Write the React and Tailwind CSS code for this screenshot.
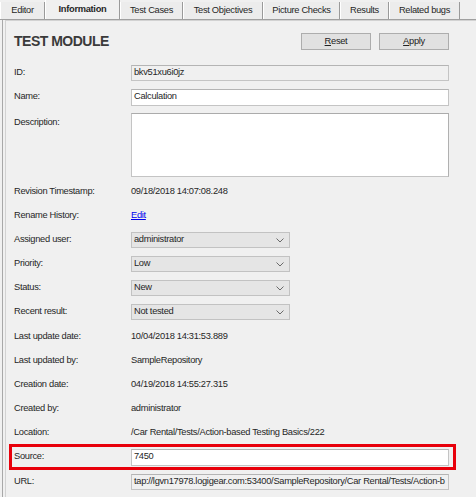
import React from 'react';

const TABS = [
  { label: 'Editor', w: 45 },
  { label: 'Information', w: 75, active: true },
  { label: 'Test Cases', w: 63 },
  { label: 'Test Objectives', w: 80 },
  { label: 'Picture Checks', w: 77 },
  { label: 'Results', w: 49 },
  { label: 'Related bugs', w: 71 },
];

function Chevron() {
  return (
    <svg width="8" height="5" viewBox="0 0 8 5" className="mr-[5px]">
      <path d="M0.5 0.5 L4 4 L7.5 0.5" fill="none" stroke="#6a6a6a" strokeWidth="1" />
    </svg>
  );
}

function Row({ label, children, className = '' }) {
  return (
    <div className={`flex h-[24px] items-center ${className}`}>
      <div className="w-[117px] shrink-0">{label}</div>
      <div className="flex-1 min-w-0 whitespace-nowrap">{children}</div>
    </div>
  );
}

function Select({ value }) {
  return (
    <div className="flex h-[16px] w-[159px] items-center justify-between border border-[#c2c2c2] bg-[#e5e5e5] pl-[2px]">
      <span>{value}</span>
      <Chevron />
    </div>
  );
}

function Field({ value, readOnly, h = 'h-[17px]' }) {
  return (
    <div
      className={`flex ${h} items-center overflow-hidden whitespace-nowrap border border-[#c4c4c4] border-t-[#b4b4b4] pl-[2px] ${
        readOnly ? 'bg-[#f0f0f0]' : 'bg-white'
      }`}
    >
      {value}
    </div>
  );
}

export default function App() {
  return (
    <div className="w-[476px] h-[497px] overflow-hidden bg-[#f0f0f0] text-[9.3px] tracking-[-0.3px] text-[#262626] font-['Liberation_Sans',Arial,sans-serif]">
      {/* Tabs */}
      <div className="flex h-[20px] items-end border-b border-[#a0a0a0]">
        {TABS.map(t => (
          <div
            key={t.label}
            style={{ width: t.w }}
            className={
              t.active
                ? 'flex h-[20px] items-start justify-center border-l border-white border-r border-r-[#9a9a9a] bg-[#f0f0f0] pt-[4px] font-bold'
                : 'flex h-[17px] items-center justify-center border-l border-white border-r border-r-[#9a9a9a] bg-[#ececec]'
            }
          >
            {t.label}
          </div>
        ))}
      </div>

      {/* Panel */}
      <div className="ml-[2px] h-[477px] border-l border-[#a8a8a8]">
        <div className="ml-[2px] h-full border-l border-t border-[#d2d2d2] pl-[8px] pr-[27px]">
          <div className="mt-[12px] flex h-[17px] items-center justify-between">
            <h1 className="text-[14px] font-bold tracking-[-0.5px] text-[#3a3a3a]">TEST MODULE</h1>
            <div className="flex gap-[8px]">
              <button className="h-[17px] w-[70px] border border-[#adadad] bg-[#e1e1e1] text-[9.3px] text-[#222]">
                <span className="underline">R</span>eset
              </button>
              <button className="h-[17px] w-[70px] border border-[#adadad] bg-[#e1e1e1] text-[9.3px] text-[#222]">
                <span className="underline">A</span>pply
              </button>
            </div>
          </div>

          <div className="mt-[11px]">
            <Row label="ID:">
              <Field value="bkv51xu6i0jz" readOnly h="h-[16px]" />
            </Row>
            <Row label="Name:">
              <Field value="Calculation" />
            </Row>
            <div className="flex h-[71px] items-start">
              <div className="w-[117px] shrink-0 pt-[7px]">Description:</div>
              <div className="mt-[4px] h-[64px] flex-1 border border-[#c4c4c4] border-t-[#ababab] border-r-[#b0b0b0] bg-white" />
            </div>
            <Row label="Revision Timestamp:">09/18/2018 14:07:08.248</Row>
            <Row label="Rename History:">
              <span className="text-[#0000ee] underline">Edit</span>
            </Row>
            <Row label="Assigned user:">
              <Select value="administrator" />
            </Row>
            <Row label="Priority:">
              <Select value="Low" />
            </Row>
            <Row label="Status:">
              <Select value="New" />
            </Row>
            <Row label="Recent result:">
              <Select value="Not tested" />
            </Row>
            <Row label="Last update date:" className="mt-[1px]">10/04/2018 14:31:53.889</Row>
            <Row label="Last updated by:">SampleRepository</Row>
            <Row label="Creation date:">04/19/2018 14:55:27.315</Row>
            <Row label="Created by:">administrator</Row>
            <Row label="Location:">/Car Rental/Tests/Action-based Testing Basics/222</Row>
            <div className="-mt-[1px] -ml-[5px] -mr-[7px] flex h-[26px] items-center border-[3px] border-[#e8000b] pl-[2px] pr-[4px]">
              <div className="w-[117px] shrink-0">Source:</div>
              <div className="flex-1">
                <Field value="7450" />
              </div>
            </div>
            <Row label="URL:">
              <Field
                value="tap://lgvn17978.logigear.com:53400/SampleRepository/Car Rental/Tests/Action-b"
                readOnly
                h="h-[16px]"
              />
            </Row>
          </div>
        </div>
      </div>
    </div>
  );
}
